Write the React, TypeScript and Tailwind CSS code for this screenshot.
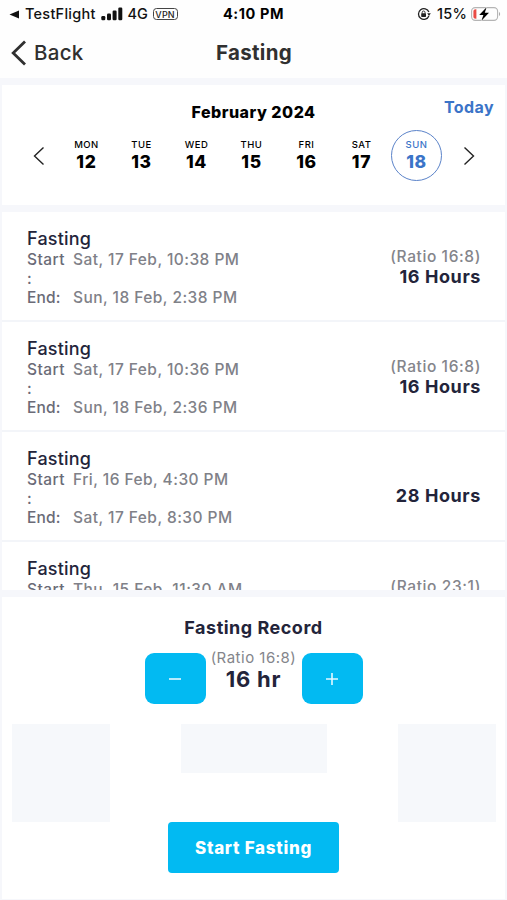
type Entry = { start: string; end?: string; ratio?: string; total?: string };

const days: [string, string][] = [
  ["MON", "12"],
  ["TUE", "13"],
  ["WED", "14"],
  ["THU", "15"],
  ["FRI", "16"],
  ["SAT", "17"],
  ["SUN", "18"],
];

const entries: Entry[] = [
  { start: "Sat, 17 Feb, 10:38 PM", end: "Sun, 18 Feb, 2:38 PM", ratio: "(Ratio 16:8)", total: "16 Hours" },
  { start: "Sat, 17 Feb, 10:36 PM", end: "Sun, 18 Feb, 2:36 PM", ratio: "(Ratio 16:8)", total: "16 Hours" },
  { start: "Fri, 16 Feb, 4:30 PM", end: "Sat, 17 Feb, 8:30 PM", total: "28 Hours" },
  { start: "Thu, 15 Feb, 11:30 AM", ratio: "(Ratio 23:1)" },
];

function StatusBar() {
  return (
    <div className="grid h-[28px] grid-cols-[1fr_auto_1fr] items-center pr-[6px] pl-[9px] text-[14px] leading-none font-medium text-[#111]">
      <div className="flex items-center">
        <svg width="11" height="9" viewBox="0 0 11 9" fill="#111">
          <path d="M0.5 4.5 L10 0.5 V8.5 Z" />
        </svg>
        <span className="ml-[5px] text-[14.5px] tracking-[0.25px]">TestFlight</span>
        <svg className="ml-[5px]" width="22" height="14" viewBox="0 0 22 14" fill="#111">
          <rect x="0.3" y="9" width="4" height="4.3" rx="1.2" />
          <rect x="6" y="6.6" width="4" height="6.7" rx="1.2" />
          <rect x="11.6" y="3.6" width="4" height="9.7" rx="1.2" />
          <rect x="17.3" y="0.5" width="4" height="12.8" rx="1.2" />
        </svg>
        <span className="ml-[5px] text-[14.5px] tracking-[-0.2px]">4G</span>
        <span className="ml-[5px] flex h-[12px] w-[25px] items-center justify-center rounded-[3.5px] border border-[#444] text-[9px] tracking-[0.2px] text-[#222]">
          VPN
        </span>
      </div>
      <span className="mr-[3px] text-[14.5px] font-bold tracking-[0.6px] text-black">4:10 PM</span>
      <div className="flex items-center justify-end">
        <svg width="14" height="14" viewBox="0 0 14 14" fill="none" stroke="#222" strokeWidth="1.3">
          <path d="M11.9 5 A5.4 5.4 0 1 0 11.9 9" />
          <path d="M10.2 6.3 L13.8 6.3 L12 9 Z" fill="#222" stroke="none" />
          <rect x="4.2" y="6.2" width="4.8" height="3.7" rx="0.6" fill="#222" stroke="none" />
          <path d="M5.2 6.6 V5.4 a1.4 1.4 0 0 1 2.8 0 V6.6" strokeWidth="0.9" />
        </svg>
        <span className="ml-[6px] text-[14.5px] tracking-[0.2px]">15%</span>
        <svg className="ml-[4px]" width="30" height="16" viewBox="0 0 30 16">
          <rect x="0.6" y="1.6" width="26" height="12.8" rx="3.6" fill="none" stroke="#b4b4b4" strokeWidth="1.1" />
          <path d="M28 6 C29.5 6.6 29.5 9.4 28 10 Z" fill="#aaa" />
          <path d="M2.4 5.4 C2.4 4 3.2 3.2 4.8 3.2 H5.4 V12.8 H4.8 C3.2 12.8 2.4 12 2.4 10.6 Z" fill="#ea4b45" />
          <path d="M15.6 1.2 L8.2 9 H12.4 L10.4 14.8 L18 6.8 H13.8 Z" fill="#000" stroke="#fff" strokeWidth="0.8" paintOrder="stroke" />
        </svg>
      </div>
    </div>
  );
}

function NavBar() {
  return (
    <div className="grid h-[50px] grid-cols-[1fr_auto_1fr] items-center pl-[11px] text-[#303030]">
      <div className="flex items-center">
        <svg width="16" height="26" viewBox="0 0 16 26" fill="none" stroke="#303030" strokeWidth="2.8">
          <path d="M14 1.5 L2.2 13 L14 24.5" />
        </svg>
        <span className="ml-[7px] text-[20.5px] leading-none font-[450] tracking-[0.3px]">Back</span>
      </div>
      <h1 className="mr-[10px] text-[20.5px] leading-none font-bold tracking-[0.3px]">Fasting</h1>
    </div>
  );
}

function Chevron({ left }: { left?: boolean }) {
  return (
    <svg width="12" height="20" viewBox="0 0 12 20" fill="none" stroke="#222" strokeWidth="1.4">
      <path d={left ? "M10.5 1.5 L1.5 10 L10.5 18.5" : "M1.5 1.5 L10.5 10 L1.5 18.5"} />
    </svg>
  );
}

function Calendar() {
  return (
    <section className="h-[120px] bg-white">
      <div className="grid h-[45px] grid-cols-[1fr_auto_1fr] px-[11px]">
        <span />
        <h2 className="pt-[18px] text-[16px] leading-[18px] font-extrabold tracking-[0.5px] text-black">February 2024</h2>
        <span className="pt-[13px] text-right text-[16px] leading-[18px] font-bold tracking-[0.4px] text-[#3b74c8]">Today</span>
      </div>
      <div className="flex h-[51px] items-center pl-[31px]">
        <Chevron left />
        <div className="mr-[19px] ml-[14px] flex">
          {days.map(([name, num]) => {
            const on = num === "18";
            return (
              <div key={num} className="flex w-[55px] justify-center">
                <div
                  className={`flex h-[51px] w-[51px] flex-col items-center rounded-full border-[1.5px] pt-[8px] ${
                    on ? "border-[#5b83c9] text-[#3b74c8]" : "border-transparent text-black"
                  }`}
                >
                  <span className="text-[9.5px] leading-[12px] font-medium tracking-[0.5px]">{name}</span>
                  <span className="text-[17.5px] leading-[21px] font-extrabold tracking-[0.7px]">{num}</span>
                </div>
              </div>
            );
          })}
        </div>
        <Chevron />
      </div>
    </section>
  );
}

function EntryRow({ entry }: { entry: Entry }) {
  return (
    <div className="flex h-[110px] shrink-0 justify-between border-b-2 border-[#f3f5f9] pr-[24px] pl-[25px]">
      <div className="pt-[15px]">
        <div className="text-[18px] leading-[24px] font-medium tracking-[0.2px] text-[#23243a]">Fasting</div>
        <div className="-mt-px grid grid-cols-[46px_auto] text-[15.5px] leading-[19.2px] font-medium tracking-[0.45px] whitespace-nowrap text-[#808188]">
          <div className="w-[40px] text-[#6a6b77]">
            Start
            <br />
            {entry.end && ":"}
          </div>
          <div>{entry.start}</div>
          <div className="tracking-[0.2px] text-[#6a6b77]">{entry.end && "End:"}</div>
          <div>{entry.end}</div>
        </div>
      </div>
      <div className="flex flex-col items-end pt-[35px]">
        {entry.ratio ? (
          <div className="text-[15.5px] leading-[20px] font-medium tracking-[0.6px] text-[#84858b]">{entry.ratio}</div>
        ) : (
          <div className="h-[19px]" />
        )}
        <div className="text-[18px] leading-[20px] font-bold tracking-[0.6px] text-[#23243a]">{entry.total}</div>
      </div>
    </div>
  );
}

function StepButton({ plus }: { plus?: boolean }) {
  return (
    <button className="flex h-[51px] w-[61px] items-center justify-center rounded-[9px] bg-[#02baf2]">
      <svg width="14" height="14" viewBox="0 0 14 14" stroke="#e4f8ff" strokeWidth="1.6">
        <path d={plus ? "M1 7 H13 M7 1 V13" : "M1 7 H13"} />
      </svg>
    </button>
  );
}

function Recorder() {
  return (
    <section className="flex h-[302px] flex-col items-center bg-white">
      <h2 className="mt-[19px] text-[18px] leading-[24px] font-bold tracking-[0.5px] text-[#23243a]">Fasting Record</h2>
      <div className="mt-[13px] flex h-[51px]">
        <StepButton />
        <div className="-mt-[5px] flex w-[96px] flex-col items-center whitespace-nowrap">
          <span className="text-[15px] leading-[20px] tracking-[0.5px] text-[#84858b]">(Ratio 16:8)</span>
          <span className="text-[22px] leading-[22px] font-bold tracking-[0.8px] text-[#23243a]">16 hr</span>
        </div>
        <StepButton plus />
      </div>
      <div className="mt-[20px] flex h-[98px] w-full justify-between pr-[9px] pl-[10px]">
        <div className="h-[98px] w-[98px] bg-[#f6f8fb]" />
        <div className="h-[49px] w-[146px] bg-[#f6f8fb]" />
        <div className="h-[98px] w-[98px] bg-[#f6f8fb]" />
      </div>
      <button className="h-[51px] w-[171px] rounded-[4px] bg-[#02baf2] pt-[1px] text-[17px] leading-none font-extrabold tracking-[0.7px] text-white">
        Start Fasting
      </button>
    </section>
  );
}

export default function App() {
  return (
    <div className="flex h-[900px] w-[507px] flex-col overflow-hidden bg-[#f6f7fb] font-['Inter','Liberation_Sans',sans-serif] [font-optical-sizing:none]">
      <header className="bg-[#fefefe]">
        <StatusBar />
        <NavBar />
      </header>
      <main className="flex flex-col px-[2px] pt-[7px]">
        <Calendar />
        <section className="mt-[7px] flex h-[378px] flex-col overflow-hidden bg-white">
          {entries.map((e) => (
            <EntryRow key={e.start} entry={e} />
          ))}
        </section>
        <div className="mt-[7px]">
          <Recorder />
        </div>
      </main>
    </div>
  );
}
